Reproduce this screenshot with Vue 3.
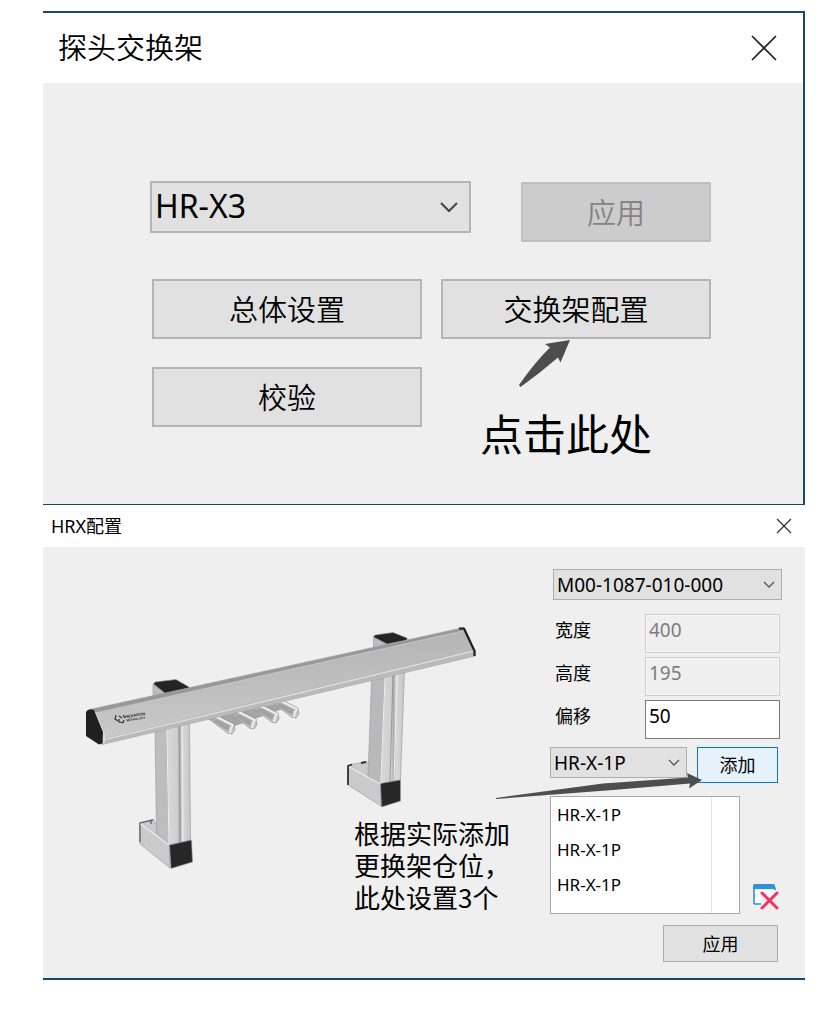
<script setup>
import { ref } from 'vue'

const rack = ref('HR-X3')
const model = ref('M00-1087-010-000')
const slotType = ref('HR-X-1P')
const fields = ref([
  { id: 'width', label: '宽度', value: '400', disabled: true },
  { id: 'height', label: '高度', value: '195', disabled: true },
  { id: 'offset', label: '偏移', value: '50', disabled: false },
])
const slots = ref(['HR-X-1P', 'HR-X-1P', 'HR-X-1P'])
const caption = ['根据实际添加', '更换架仓位，', '此处设置3个']
const prongs = [
  { x: 213, y: 718 },
  { x: 235, y: 713 },
  { x: 257, y: 707 },
  { x: 277, y: 702 },
]
</script>

<template>
  <main class="page">
    <section class="window window-rack">
      <header class="bar bar-large">
        <h1>探头交换架</h1>
        <button class="close" type="button" aria-label="关闭">
          <svg width="26" height="26" viewBox="0 0 26 26"><path d="M1 1L25 25M25 1L1 25" stroke="#222" stroke-width="1.7" fill="none" /></svg>
        </button>
      </header>
      <div class="rack-form">
        <div class="rack-top">
          <div class="picker picker-large">
            <select v-model="rack" aria-label="交换架型号"><option>HR-X3</option></select>
            <svg class="chevron" width="20" height="12" viewBox="0 0 20 12"><path d="M2 2L10 10L18 2" stroke="#444" stroke-width="2" fill="none" /></svg>
          </div>
          <button class="btn btn-large apply-large" type="button" disabled>应用</button>
        </div>
        <div class="rack-grid">
          <button class="btn btn-large" type="button">总体设置</button>
          <div class="hinted">
            <button class="btn btn-large" type="button">交换架配置</button>
            <svg class="hint-arrow" width="54" height="50" viewBox="0 0 54 50"><path d="M52 1L27 5L32 8.500Q17 23 1 46L2.500 48Q22 34 40 18.500L42.500 23.500Z" fill="#4d4d4d" /></svg>
            <p class="hint">点击此处</p>
          </div>
          <button class="btn btn-large" type="button">校验</button>
        </div>
      </div>
    </section>

    <section class="window window-config">
      <header class="bar bar-small">
        <h2>HRX配置</h2>
        <button class="close" type="button" aria-label="关闭">
          <svg width="16" height="16" viewBox="0 0 16 16"><path d="M1 1L15 15M15 1L1 15" stroke="#333" stroke-width="1.3" fill="none" /></svg>
        </button>
      </header>
      <div class="config">
        <figure class="product">
          <svg class="drawing" viewBox="83 620 397 250" role="img" aria-label="HR-X3">
            <defs>
              <linearGradient id="beam" x1="0" y1="0" x2="0.15" y2="1">
                <stop offset="0" stop-color="#b0b0b0" /><stop offset="0.5" stop-color="#bdbdbd" /><stop offset="1" stop-color="#cbcbcb" />
              </linearGradient>
              <linearGradient id="post" x1="0" y1="0" x2="1" y2="0">
                <stop offset="0" stop-color="#d8d8d8" /><stop offset="0.45" stop-color="#cfcfcf" /><stop offset="0.55" stop-color="#a9a9a9" /><stop offset="0.65" stop-color="#dadada" /><stop offset="1" stop-color="#c4c4c4" />
              </linearGradient>
            </defs>

            <g stroke="#9299a5" stroke-width="0.6" stroke-linejoin="round">
              <path d="M153 684L166 693L189 688V700H153Z" fill="#bcbcbc" />
              <path d="M153.500 684L155 682L176 679.500L189 687V690L166 694Z" fill="#242424" />
              <path d="M139.500 823L153 819L169 845L170 868L140 844Z" fill="#cacaca" />
              <path d="M155 728L166.500 724L169 845L156.500 834Z" fill="#bdbdbd" />
              <path d="M166.500 724L189.500 718L190.500 840L169 845Z" fill="url(#post)" />
              <path d="M169.500 845L191.500 840L192.500 862L171 868.500Z" fill="#272727" />

              <path d="M373.500 637L387 644L407 639V652H373.500Z" fill="#bcbcbc" />
              <path d="M373.500 637L375 635L393 632.500L407 638V640.500L387 644Z" fill="#242424" />
              <path d="M348 765L367 761.500L380.500 784L381 806L348 785Z" fill="#cacaca" />
              <path d="M371.500 679L385 675L380.500 784L368 776Z" fill="#b9b9b9" />
              <path d="M385 675L404.500 670L400.500 780L380.500 784Z" fill="url(#post)" />
              <path d="M380.500 783.500L400.500 780L400.500 801L381.500 807Z" fill="#272727" />
            </g>
            <path d="M348 785V766L352 764.500M361 763L366 762" stroke="#303030" stroke-width="1.800" fill="none" />
            <path d="M140 842V823L153 820M151 821V824" stroke="#555" stroke-width="1.200" fill="none" />
            <path d="M140.500 824L169 845M349 767L380.500 784M166.800 725L169 844M385 677L380.800 783" stroke="#ededed" stroke-width="1.100" fill="none" />
            <path d="M179 722L180.500 842M393 674L390 781" stroke="#8e8e8e" stroke-width="0.800" fill="none" />
            <path d="M182 722L183 841M397 673L394 780" stroke="#eee" stroke-width="1" fill="none" />

            <path d="M208 719L284 702L291 706L232 727L224 727Z" fill="#a5a5a5" />
            <g v-for="p in prongs" :key="p.x" :transform="`translate(${p.x} ${p.y})`">
              <path d="M-3 2L7 -1L21 6L22 12L19 16L14 15L12 13Z" fill="#c4c4c4" stroke="#858b94" stroke-width="0.600" />
              <path d="M4 1L17 8L15 13L-1 3Z" fill="#a2a2a2" />
              <path d="M6 0L20 7L18 10L17 15" stroke="#f3f3f3" stroke-width="1.600" fill="none" />
              <circle cx="5" cy="-1" r="2" fill="#f2f2f2" />
            </g>

            <path d="M90 709.500L464 627.500L475.500 652L475 656L102 744.500Z" fill="url(#beam)" stroke="#9299a5" stroke-width="0.600" />
            <path d="M90 709.500L456 629.500L464 627.500L465 630L95 713Z" fill="#989898" />
            <path d="M95 713L464 631" stroke="#c8c8c8" stroke-width="0.800" />
            <path d="M102 739L474 649L475.500 652L475 656L102 744.500Z" fill="#bababa" />
            <path d="M103 740L474 651" stroke="#e3e3e3" stroke-width="1.200" />
            <path d="M95 712L104 734V743" stroke="#dedede" stroke-width="1.500" fill="none" />
            <path d="M86 712Q88 708 94 710L103 732L102.500 743.500L99 744.500L86 736Z" fill="#202020" />
            <path d="M459 628.500L464 628.500L474.500 651V656" stroke="#202020" stroke-width="2.200" fill="none" stroke-linejoin="round" />

            <g fill="none" stroke="#333" stroke-width="1.200">
              <path d="M116 715L115 719L118 721M119 719L119 722L123 722.500L124 720M119 716L122 718M123 715L125 718" />
            </g>
            <g transform="rotate(-9 126 719)" class="brand">
              <text x="125.500" y="718">HEXAGON</text>
              <text x="126" y="721.500" class="brand-sub">METROLOGY</text>
            </g>
          </svg>
          <figcaption><span v-for="line in caption" :key="line">{{ line }}</span></figcaption>
        </figure>

        <form class="settings" @submit.prevent>
          <div class="picker picker-model">
            <select v-model="model" aria-label="型号"><option>M00-1087-010-000</option></select>
            <svg class="chevron" width="14" height="10" viewBox="0 0 14 10"><path d="M2 2L7 7L12 2" stroke="#555" stroke-width="1.3" fill="none" /></svg>
          </div>
          <div class="fields">
            <div v-for="f in fields" :key="f.id" class="field">
              <label :for="f.id">{{ f.label }}</label>
              <input :id="f.id" v-model="f.value" type="text" :disabled="f.disabled" />
            </div>
          </div>
          <div class="add-row">
            <div class="picker picker-slot">
              <select v-model="slotType" aria-label="仓位类型"><option>HR-X-1P</option></select>
              <svg class="chevron" width="14" height="10" viewBox="0 0 14 10"><path d="M2 2L7 7L12 2" stroke="#555" stroke-width="1.3" fill="none" /></svg>
            </div>
            <button class="btn add" type="button">添加</button>
            <svg class="add-arrow" width="208" height="28" viewBox="0 0 208 28"><path d="M1 26L108 11.500L193 5.500L192 1L207 8L194 16.500L195 11.500L118 18L1 27Z" fill="#4d4d4d" /></svg>
          </div>
          <div class="list-row">
            <div class="listbox">
              <ul><li v-for="(s, i) in slots" :key="i">{{ s }}</li></ul>
            </div>
            <button class="remove" type="button" aria-label="删除">
              <svg width="28" height="28" viewBox="0 0 28 28">
                <path d="M2 21V5H23V7M2 21H9" fill="none" stroke="#2f91d8" stroke-width="1.6" />
                <path d="M3 7H22V11L18 15L11 9L8 13L11 20H3Z" fill="#fafafa" />
                <path d="M1 6V3Q1 1 3 1H21Q23 1 23 3V6Z" fill="#2f91d8" />
                <path d="M10 10L25 25M25 10L10 25" stroke="#fb2e62" stroke-width="3" stroke-linecap="round" />
              </svg>
            </button>
          </div>
          <button class="btn apply" type="button">应用</button>
        </form>
      </div>
    </section>
  </main>
</template>

<style>
body {
  background: #fff;
}
</style>

<style scoped>
.page {
  padding: 11px 30px 29px 43px;
  font-family: "Noto Sans", "Noto Sans CJK SC", sans-serif;
  font-size: 18px;
  color: #000;
}
.page * {
  box-sizing: border-box;
}
h1,
h2,
p,
ul,
figure {
  margin: 0;
  padding: 0;
}
button,
select,
input {
  font-family: inherit;
  color: inherit;
  margin: 0;
}
.window {
  background: #efefef;
}
.window-rack {
  border: solid #1d4a62;
  border-width: 2px 2px 1px 0;
}
.window-config {
  border-bottom: 2px solid #14496d;
}
.bar {
  display: flex;
  align-items: center;
  justify-content: space-between;
  background: #fff;
}
.bar h1,
.bar h2 {
  padding-bottom: 2px;
  font-weight: 350;
}
.bar-large {
  height: 70px;
  padding: 0 26px 0 15px;
}
.bar-large h1 {
  padding-bottom: 4px;
  font-size: 29px;
}
.bar-small {
  height: 42px;
  padding: 0 13px 0 8px;
}
.bar-small h2 {
  font-size: 18px;
  font-weight: 400;
}
.close,
.remove {
  display: flex;
  padding: 0;
  border: 0;
  background: none;
}
.btn {
  padding: 0 0 2px;
  border: 1px solid #adadad;
  background: #e1e1e1;
  font-size: 18px;
  font-weight: 400;
}
.btn-large {
  width: 100%;
  height: 60px;
  border-width: 2px;
  border-color: #b4b4b4;
  font-size: 29px;
  font-weight: 350;
}
.btn:disabled {
  border-color: #bfbfbf;
  background: #ccc;
  color: #838383;
}
.rack-form {
  padding: 98px 92px 77px 107px;
}
.rack-top {
  display: flex;
  gap: 50px;
  margin-bottom: 37px;
}
.apply-large {
  flex: 0 0 190px;
  margin-top: 1px;
}
.rack-grid {
  display: grid;
  grid-template-columns: 1fr 1fr;
  gap: 28px 19px;
  padding-left: 2px;
}
.hinted {
  position: relative;
}
.hint-arrow {
  position: absolute;
  top: 60px;
  left: 77px;
}
.hint {
  position: absolute;
  top: 124px;
  left: 39px;
  font-size: 43px;
  line-height: 64px;
  white-space: nowrap;
}
.picker {
  position: relative;
}
.picker select {
  display: block;
  width: 100%;
  height: 31px;
  padding: 0 3px;
  border: 1px solid #adadad;
  border-radius: 0;
  background: #e1e1e1;
  font-size: 19px;
  line-height: 28px;
  font-weight: 400;
  appearance: none;
}
.chevron {
  position: absolute;
  top: 11px;
  right: 6px;
  pointer-events: none;
}
.picker-large {
  flex: 1;
}
.picker-large select {
  height: 52px;
  padding-bottom: 2px;
  border: 2px solid #b4b4b4;
  font-size: 32px;
  line-height: 44px;
}
.picker-large .chevron {
  top: 20px;
  right: 12px;
}
.config {
  display: flex;
  padding: 22px 23px 16px 40px;
}
.product {
  position: relative;
  flex: 1;
  padding: 51px 70px 0 0;
}
.drawing {
  display: block;
  width: 100%;
}
.brand {
  font-family: "Liberation Sans", sans-serif;
  font-size: 4px;
  font-weight: 700;
  fill: #1c1c1c;
}
.brand-sub {
  font-size: 3px;
}
figcaption {
  position: absolute;
  top: 248px;
  right: 40px;
  font-family: "Noto Sans CJK SC", sans-serif;
  font-size: 26px;
  line-height: 32px;
  white-space: nowrap;
}
figcaption span {
  display: block;
}
.settings {
  display: flex;
  flex-direction: column;
  flex: 0 0 232px;
}
.picker-model {
  margin-left: 3px;
}
.fields {
  display: grid;
  gap: 4px;
  margin: 14px 2px 8px 5px;
}
.field {
  display: flex;
  align-items: flex-start;
  justify-content: space-between;
}
.field label {
  line-height: 33px;
}
.field input {
  width: 135px;
  height: 39px;
  padding: 0 3px 8px;
  border: 1px solid #7a7a7a;
  background: #fff;
  font-size: 19px;
}
.field input:disabled {
  border-color: #ccc;
  background: #efefef;
  box-shadow: inset 0 0 0 1px #f8f8f8;
  color: #7d7d7d;
}
.add-row {
  position: relative;
  display: flex;
  justify-content: space-between;
  margin-right: 4px;
  margin-bottom: 13px;
}
.picker-slot {
  flex: 0 0 137px;
}
.add {
  width: 81px;
  height: 36px;
  border-color: #0078d7;
  background: #e5f1fb;
}
.add-arrow {
  position: absolute;
  top: 25px;
  right: 75px;
  pointer-events: none;
}
.list-row {
  display: flex;
  align-items: flex-end;
  justify-content: space-between;
  margin-right: 2px;
}
.remove {
  margin-bottom: 3px;
}
.listbox {
  width: 190px;
  height: 118px;
  padding-right: 27px;
  border: 1px solid #a9a9a9;
  background: #fff;
}
.listbox ul {
  height: 100%;
  padding: 0 0 0 6px;
  border-right: 1px solid #e5e5e5;
  list-style: none;
}
.listbox li {
  font-size: 17px;
  line-height: 35px;
}
.apply {
  align-self: flex-end;
  width: 115px;
  height: 37px;
  margin: 11px 4px 0 0;
}
</style>
